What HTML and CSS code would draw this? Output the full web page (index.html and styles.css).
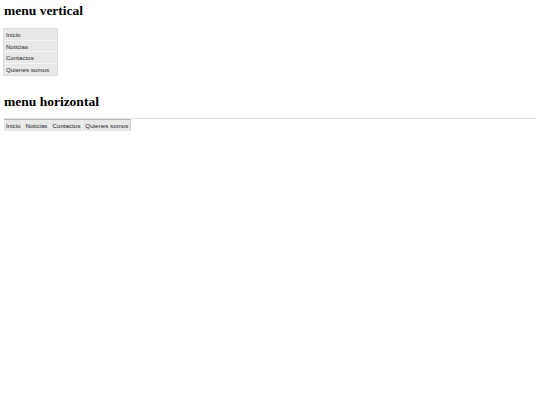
FILE: index.html
```html
<!DOCTYPE html>
<html>
<head>
<meta charset="utf-8">
<link rel="stylesheet" href="styles.css">
</head>
<body>
<h1 class="title">menu vertical</h1>
<ul class="vmenu">
  <li>Inicio</li>
  <li>Noticias</li>
  <li>Contactos</li>
  <li>Quienes somos</li>
</ul>
<h1 class="title title-h">menu horizontal</h1>
<div class="rule"></div>
<ul class="hmenu">
  <li>Inicio</li>
  <li>Noticias</li>
  <li>Contactos</li>
  <li>Quienes somos</li>
</ul>
</body>
</html>
```
FILE: styles.css
```css
html, body { margin: 0; padding: 0; background: #fff; }
body { padding: 0 4px; }
.title {
  font-family: "Liberation Serif", "Times New Roman", serif;
  font-weight: bold;
  font-size: 13.5px;
  line-height: 16px;
  margin: 3px 0 0 0;
  color: #000;
}
.title-h { margin-top: 18px; }
.vmenu {
  list-style: none;
  margin: 9px 0 0 -1px;
  padding: 0;
  width: 55px;
  border: 1px solid #dcdcdc;
  box-sizing: border-box;
  font-family: "Liberation Sans", Arial, sans-serif;
  font-size: 6.2px;
  color: #222;
}
.vmenu li {
  background: #e8e8e8;
  height: 11.5px;
  line-height: 11px;
  padding-left: 2px;
  border-bottom: 1px solid #f4f4f4;
  box-sizing: border-box;
}
.vmenu li:last-child { border-bottom: none; }
.rule {
  height: 1px;
  background: #e2e2e2;
  margin-top: 7.6px;
}
.hmenu {
  list-style: none;
  margin: 0;
  padding: 0;
  display: flex;
  width: max-content;
  border-top: 1px solid #b8b8b8;
  border-right: 1px solid #cfcfcf;
  font-family: "Liberation Sans", Arial, sans-serif;
  font-size: 6.2px;
  color: #222;
}
.hmenu li {
  background: #e8e8e8;
  height: 11px;
  line-height: 11px;
  padding: 0 2px;
  border-right: 1px solid #f4f4f4;
}
.hmenu li:last-child { border-right: none; }
```
